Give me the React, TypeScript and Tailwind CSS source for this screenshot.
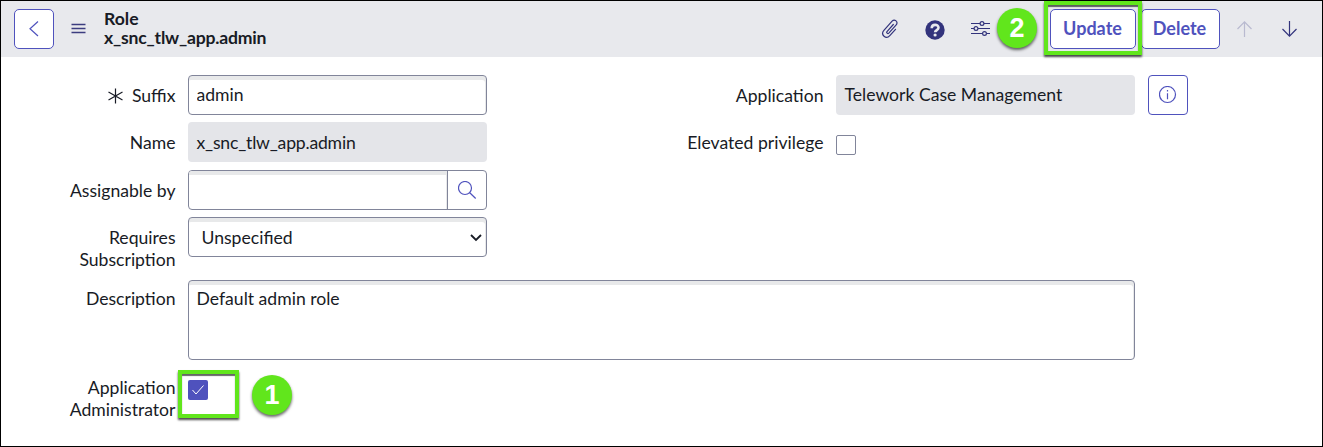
import type { ReactNode } from "react";

const control =
  "w-[299px] h-10 shrink-0 rounded-[4px] border border-[#81859a] bg-white shadow-[inset_-1px_4px_0_#e8e9ea] pl-[7.5px] pr-2 pb-[2px] text-left";
const readOnly = "w-[299px] h-10 shrink-0 rounded-[4px] bg-[#e4e5e9] pl-[8.5px] flex items-center";

function Label({ children, className = "w-[174.5px]" }: { children: ReactNode; className?: string }) {
  return (
    <div className={`${className} shrink-0 text-right leading-[22px] pt-[10px] mr-[12.5px]`}>{children}</div>
  );
}

function Badge({ children, className }: { children: ReactNode; className: string }) {
  return (
    <div
      className={`absolute size-10 rounded-full bg-[#61e61c] text-white font-bold text-[27px] leading-[41px] text-center font-['Liberation_Sans',sans-serif] shadow-[0_2px_3px_rgba(0,0,0,0.6)] ${className}`}
    >
      {children}
    </div>
  );
}

function Highlight({ className }: { className: string }) {
  return (
    <div
      className={`absolute border-4 border-[#61e61c] shadow-[0_2px_2px_rgba(0,0,0,0.7),inset_0_2px_1px_rgba(0,0,0,0.6)] ${className}`}
    />
  );
}

export default function App() {
  return (
    <div className="relative w-[1323px] h-[447px] overflow-hidden border border-black bg-white font-[Lato,sans-serif] text-[17.6px] text-[#181b25]">
      <header className="flex items-center h-14 bg-[#e8e9ed] pl-[13px] pr-[24.5px]">
        <button className="size-10 rounded-[5px] border border-[#4f52bd] bg-white flex items-center justify-center">
          <svg width="12" height="18" viewBox="0 0 12 18" fill="none" stroke="#4f52bd" strokeWidth="1.2">
            <path d="M10 1.500 2 8.800l8 7.200" />
          </svg>
        </button>
        <svg className="ml-[17px]" width="15" height="12" viewBox="0 0 15 12" stroke="#3c3d80" strokeWidth="1.3">
          <path d="M.5 1.5h14M.5 5.5h14M.5 9.5h14" />
        </svg>
        <h1 className="ml-[18px] -mt-[2px] flex flex-col font-bold leading-[19px]">
          <span>Role</span>
          <span className="tracking-[-0.2px]">x_snc_tlw_app.admin</span>
        </h1>
        <div className="ml-auto flex items-center text-[#32337c]">
          <svg width="18" height="20" viewBox="0 0 18 20" fill="none" stroke="currentColor" strokeWidth="1.2" strokeLinecap="round">
            <path d="M12.3 5.5 6 12.6c-.9 1 .7 2.6 1.8 1.5l7.4-8.3c2.5-2.9-1.6-6.3-4.1-3.6L2.9 11.4c-3.7 4.3 2.1 9.4 5.9 5.2l5.7-6.3" />
          </svg>
          <svg className="ml-[26px] mt-[2px]" width="20" height="20" viewBox="0 0 20 20" fill="none">
            <circle cx="10" cy="10" r="9.7" fill="currentColor" />
            <path d="M6.7 8.2c0-4.5 6.8-4.2 6.8-.5 0 2.4-3.4 2.3-3.4 4.600" stroke="#e8e9ed" strokeWidth="2.6" />
            <circle cx="10.1" cy="15" r="1.6" fill="#e8e9ed" />
          </svg>
          <svg className="ml-[26px]" width="19" height="16" viewBox="0 0 19 16" fill="none" stroke="currentColor" strokeWidth="1.2">
            <path d="M0 2.5h9M13 2.5h6M0 7.5h3M7 7.5h12M0 12.500h11.500M15.500 12.500H19" />
            <circle cx="11" cy="2.5" r="1.9" />
            <circle cx="5" cy="7.5" r="1.9" />
            <circle cx="13.5" cy="12.5" r="1.9" />
          </svg>
          <button className="ml-[60px] w-[86px] h-10 rounded-[5px] border border-[#4f52bd] bg-white pb-px pr-px text-[18px] font-bold text-[#4f52bd]">
            Update
          </button>
          <button className="ml-[5px] w-[79px] h-10 rounded-[5px] border border-[#4f52bd] bg-white pb-px pr-[2px] text-[18px] font-bold text-[#4f52bd]">
            Delete
          </button>
          <svg className="ml-[16.5px] text-[#b9bad0]" width="16" height="18" viewBox="0 0 16 18" fill="none" stroke="currentColor" strokeWidth="1.2">
            <path d="M7.500 17V2M.5 9l7-7.200 7 7.200" />
          </svg>
          <svg className="ml-[29px]" width="16" height="18" viewBox="0 0 16 18" fill="none" stroke="currentColor" strokeWidth="1.2">
            <path d="M7.500 1v15M.5 9l7 7.200 7-7.200" />
          </svg>
        </div>
      </header>

      <main className="pt-[18px]">
        <div className="flex h-[47px]">
          <Label>
            <span className="inline-flex items-center">
              <svg className="mr-[8px]" width="16" height="16" viewBox="0 0 16 16" stroke="currentColor" strokeWidth="1.2">
                <path d="M7.500 .5v15M.5 4l14 8M14.500 4l-14 8" />
              </svg>
              Suffix
            </span>
          </Label>
          <input className={control} defaultValue="admin" />
          <Label className="w-[336.5px]">Application</Label>
          <div className={`${readOnly} pt-px`}>Telework Case Management</div>
          <button className="ml-[13px] size-10 rounded-[4px] border border-[#4f52bd] flex items-center justify-center">
            <svg width="18" height="18" viewBox="0 0 18 18" fill="none" stroke="#4f52bd" strokeWidth="1.2">
              <circle cx="8.5" cy="8.5" r="8" />
              <path d="M8.500 7.200v6M8.500 4.100v1.400" />
            </svg>
          </button>
        </div>
        <div className="flex h-[48px]">
          <Label>Name</Label>
          <div className={`${readOnly} pt-[3px]`}>
            <span className="tracking-[-0.2px]">x_snc_tlw_app.admin</span>
          </div>
          <Label className="w-[336.5px]">Elevated privilege</Label>
          <div className="mt-[13px] size-5 rounded-[2px] border border-[#81859a]" />
        </div>
        <div className="flex h-[47px]">
          <Label>Assignable by</Label>
          <div className="flex w-[299px] h-10 rounded-[4px] border border-[#81859a] overflow-hidden">
            <input className="w-[259px] border-r border-[#81859a] shadow-[inset_-1px_4px_0_#e8e9ea] px-2" />
            <button className="flex-1 flex items-center justify-center">
              <svg width="19" height="19" viewBox="0 0 19 19" fill="none" stroke="#4f52bd" strokeWidth="1.2">
                <circle cx="7" cy="7" r="6.5" />
                <path d="m11.500 11.500 6.200 6" />
              </svg>
            </button>
          </div>
        </div>
        <div className="flex h-[63px]">
          <Label>
            Requires
            <br />
            Subscription
          </Label>
          <button className="flex w-[299px] h-10 shrink-0 items-center justify-between rounded-[4px] border border-[#81859a] bg-white pt-[2px] pl-[12.5px] pr-[4px] shadow-[inset_-1px_4px_0_#e8e9ea]">
            Unspecified
            <svg width="12" height="8" viewBox="0 0 12 8" fill="none" stroke="#181b25" strokeWidth="1.8">
              <path d="m1 1 5 5 5-5" />
            </svg>
          </button>
        </div>
        <div className="flex h-[89px]">
          <Label className="w-[174.5px] -mt-[2px]">Description</Label>
          <textarea
            className="block w-[947px] h-20 resize-none rounded-[4px] border border-[#81859a] shadow-[inset_-1px_4px_0_#e8e9ea] pl-[7.5px] pr-2 pt-[7px] leading-[22px]"
            defaultValue="Default admin role"
          />
        </div>
        <div className="flex">
          <Label className="w-[174.5px] -mt-[2px]">
            Application
            <br />
            Administrator
          </Label>
          <div className="mt-[11px] size-5 rounded-[2px] bg-[#4f52bd] flex items-center justify-center">
            <svg width="14" height="12" viewBox="0 0 14 12" fill="none" stroke="white" strokeWidth="1">
              <path d="m1.500 6 3.500 4L12.500 1.500" />
            </svg>
          </div>
        </div>
      </main>

      <Highlight className="left-[1043px] top-0 w-[98px] h-[54px]" />
      <Badge className="left-[996px] top-[7px]">2</Badge>
      <Highlight className="left-[177px] top-[369px] w-[61px] h-[48px]" />
      <Badge className="left-[251px] top-[374px]">1</Badge>
    </div>
  );
}
